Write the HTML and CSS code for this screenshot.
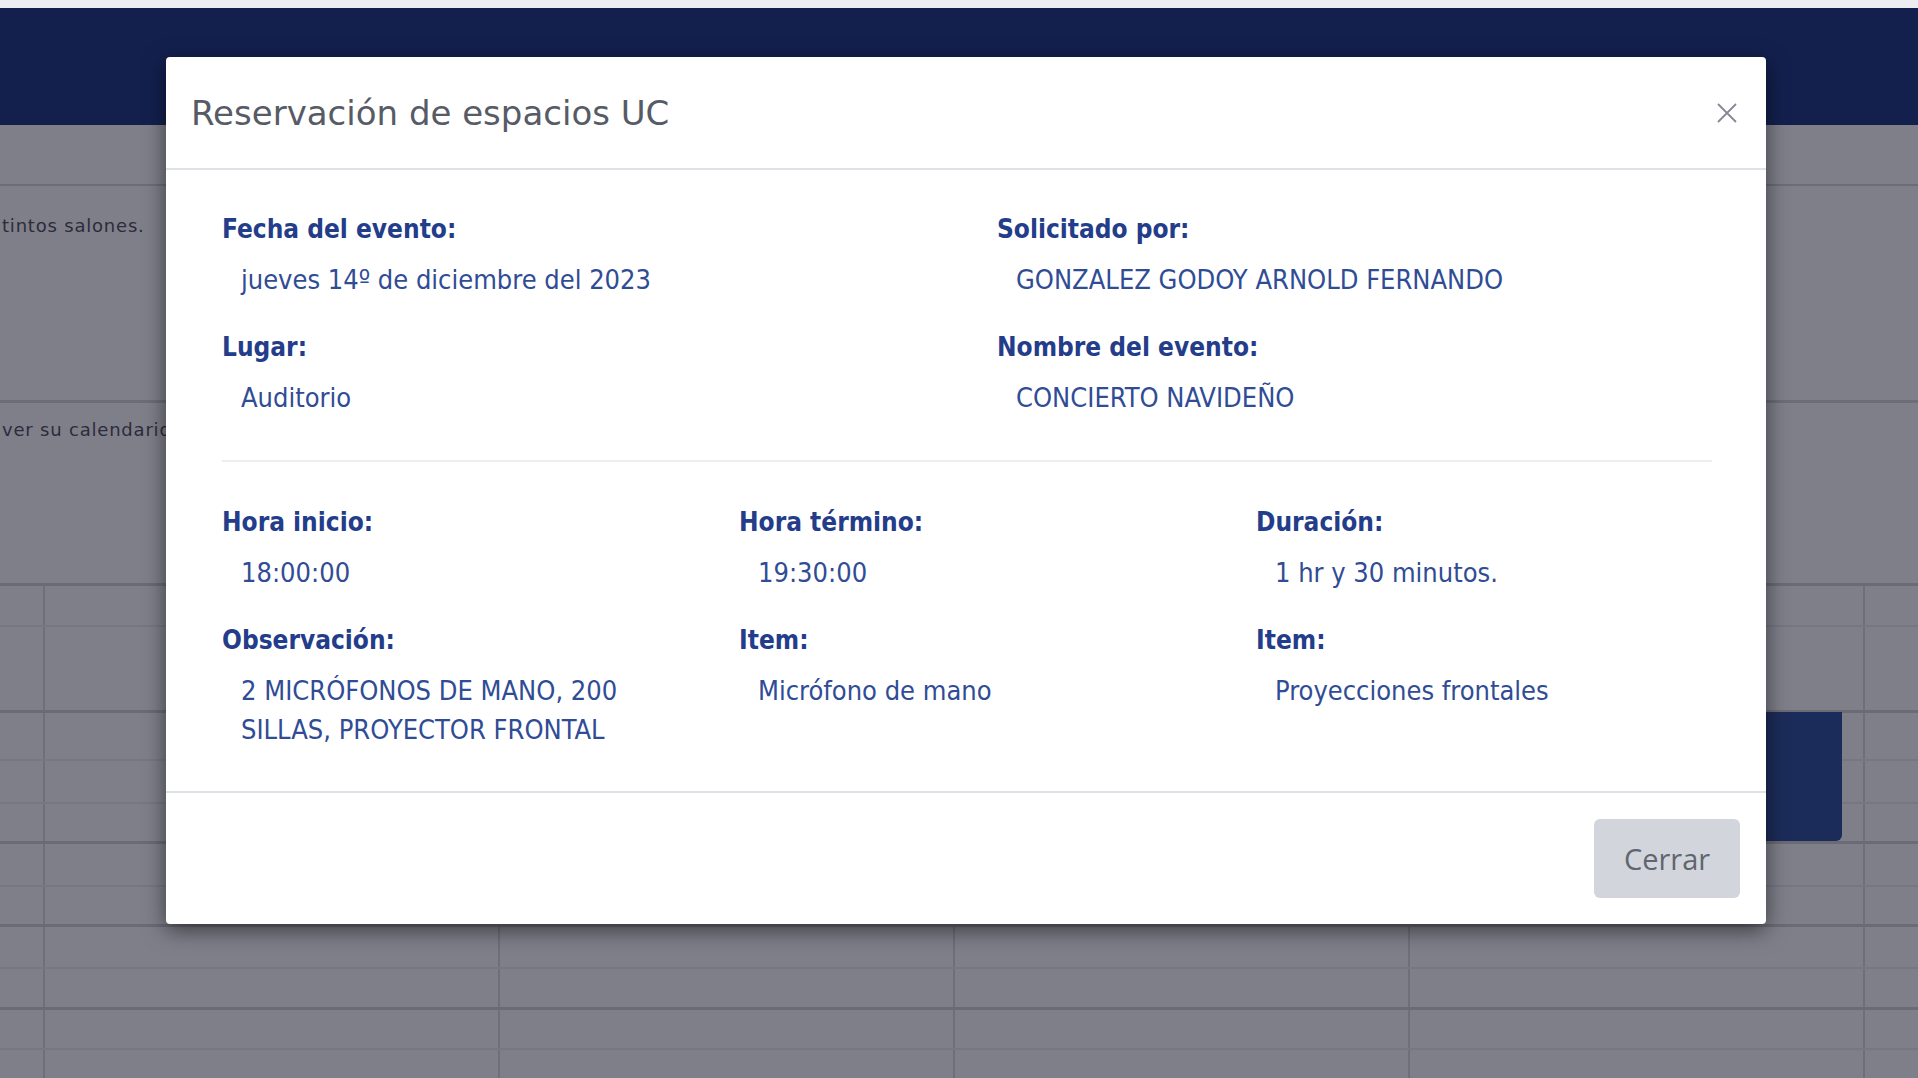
FILE: index.html
```html
<!DOCTYPE html>
<html lang="es">
<head>
  <meta charset="UTF-8">
  <meta name="viewport" content="width=device-width, initial-scale=1.0">
  <title>Reservación de espacios UC</title>
  <link rel="stylesheet" href="styles.css">
</head>
<body>
  <div class="top-strip"></div>
  <nav class="navbar"></nav>
  <div class="subbar"></div>

  <div class="intro">
    <p>tintos salones.</p>
  </div>
  <div class="intro intro-second">
    <p>ver su calendario de reservas.</p>
  </div>

  <div class="calendar">
    <div class="cal-row thick h42"></div>
    <div class="cal-row thin h85"></div>
    <div class="cal-row thick h49"></div>
    <div class="cal-row thin h43"></div>
    <div class="cal-row thin h39"></div>
    <div class="cal-row thick h44"></div>
    <div class="cal-row thin h39"></div>
    <div class="cal-row thick h43"></div>
    <div class="cal-row thin h40"></div>
    <div class="cal-row thick h41"></div>
    <div class="cal-row thin h40"></div>
    <div class="cal-event"></div>
  </div>

  <!-- Modal -->
  <div class="modal">
    <div class="modal-header">
      <h5 class="modal-title">Reservación de espacios UC</h5>
      <button class="close" aria-label="Close">
        <svg width="22" height="22" viewBox="0 0 22 22">
          <path d="M2 2 L20 20 M20 2 L2 20" stroke="#868993" stroke-width="1.8" fill="none"/>
        </svg>
      </button>
    </div>

    <div class="modal-body">
      <div class="info-row two">
        <div class="field">
          <div class="label">Fecha del evento:</div>
          <div class="value">jueves 14º de diciembre del 2023</div>
        </div>
        <div class="field">
          <div class="label">Solicitado por:</div>
          <div class="value">GONZALEZ GODOY ARNOLD FERNANDO</div>
        </div>
        <div class="field">
          <div class="label">Lugar:</div>
          <div class="value">Auditorio</div>
        </div>
        <div class="field">
          <div class="label">Nombre del evento:</div>
          <div class="value">CONCIERTO NAVIDEÑO</div>
        </div>
      </div>

      <hr class="divider">

      <div class="info-row three">
        <div class="field">
          <div class="label">Hora inicio:</div>
          <div class="value">18:00:00</div>
        </div>
        <div class="field">
          <div class="label">Hora término:</div>
          <div class="value">19:30:00</div>
        </div>
        <div class="field">
          <div class="label">Duración:</div>
          <div class="value">1 hr y 30 minutos.</div>
        </div>
        <div class="field">
          <div class="label">Observación:</div>
          <div class="value">2 MICRÓFONOS DE MANO, 200 SILLAS, PROYECTOR FRONTAL</div>
        </div>
        <div class="field">
          <div class="label">Item:</div>
          <div class="value">Micrófono de mano</div>
        </div>
        <div class="field">
          <div class="label">Item:</div>
          <div class="value">Proyecciones frontales</div>
        </div>
      </div>
    </div>

    <div class="modal-footer">
      <button class="btn-close">Cerrar</button>
    </div>
  </div>
</body>
</html>
```

FILE: styles.css
```css
body {
  margin: 0;
  padding: 0;
  width: 1918px;
  height: 1078px;
  overflow: hidden;
  position: relative;
  background-color: #7f7f8a;
  font-family: "DejaVu Sans Condensed", "DejaVu Sans", sans-serif;
}

.top-strip {
  height: 8px;
  background-color: #eceef2;
}

.navbar {
  height: 117px;
  background-color: #13204e;
}

.subbar {
  height: 59px;
  border-bottom: 2px solid #6d6d78;
}

.intro {
  height: 214px;
  border-bottom: 3px solid #6d6d78;
}

.intro p {
  margin: 0;
  padding: 29px 0 0 2px;
  font-family: "DejaVu Sans", sans-serif;
  font-size: 18px;
  letter-spacing: 0.8px;
  color: #2c2c3a;
}

.intro-second {
  height: 180px;
  border-bottom: none;
}

.intro-second p {
  padding-top: 16px;
}

/* calendar grid behind the modal */
.calendar {
  position: relative;
  background-image: linear-gradient(to right, #6f6f7a 2px, transparent 2px);
  background-size: 455px 100%;
  background-position: 43px 0;
}

.cal-row {
  border-top: 2px solid #6f6f7a;
  box-sizing: border-box;
}

.cal-row.thick {
  border-top: 3px solid #6b6b76;
}

.cal-row.thin {
  border-top: 2px solid #777782;
}

.h39 { height: 39px; }
.h40 { height: 40px; }
.h41 { height: 41px; }
.h42 { height: 42px; }
.h43 { height: 43px; }
.h44 { height: 44px; }
.h49 { height: 49px; }
.h85 { height: 85px; }

.cal-event {
  position: absolute;
  top: 129px;
  left: 1700px;
  width: 142px;
  height: 129px;
  background-color: #1c2c5a;
  border-radius: 0 0 6px 0;
}

/* modal */
.modal {
  position: absolute;
  top: 57px;
  left: 166px;
  width: 1600px;
  background-color: #fff;
  border-radius: 4px;
  box-shadow: 0 6px 22px rgba(0, 0, 0, 0.55);
}

.modal-header {
  display: flex;
  justify-content: space-between;
  align-items: center;
  height: 111px;
  padding: 0 28px 0 25px;
  border-bottom: 2px solid #dee2e6;
}

.modal-title {
  margin: 0;
  font-family: "DejaVu Sans", sans-serif;
  font-size: 34px;
  font-weight: normal;
  color: #575b66;
}

.close {
  border: none;
  background: none;
  padding: 0;
  display: flex;
  cursor: pointer;
}

.modal-body {
  padding: 40px 0 13px 56px;
}

.info-row {
  display: grid;
  row-gap: 0;
}

.info-row.two {
  grid-template-columns: 775px 1fr;
}

.info-row.three {
  grid-template-columns: 517px 517px 1fr;
}

.field {
  padding-right: 80px;
}

.label {
  font-weight: bold;
  font-size: 26px;
  line-height: 39px;
  color: #233d8a;
  margin-bottom: 11px;
}

.value {
  font-size: 27px;
  line-height: 39px;
  color: #304c95;
  padding-left: 19px;
  margin-bottom: 29px;
}

.divider {
  border: none;
  border-top: 2px solid #eeeeef;
  margin: 14px 54px 41px 0;
}

.modal-footer {
  display: flex;
  justify-content: flex-end;
  align-items: center;
  height: 131px;
  padding: 0 26px;
  border-top: 2px solid #dee2e6;
}

.btn-close {
  width: 146px;
  height: 79px;
  border: none;
  border-radius: 6px;
  background-color: #d2d5db;
  color: #60666f;
  font-family: "Open Sans", sans-serif;
  font-size: 29px;
  cursor: pointer;
}
```
